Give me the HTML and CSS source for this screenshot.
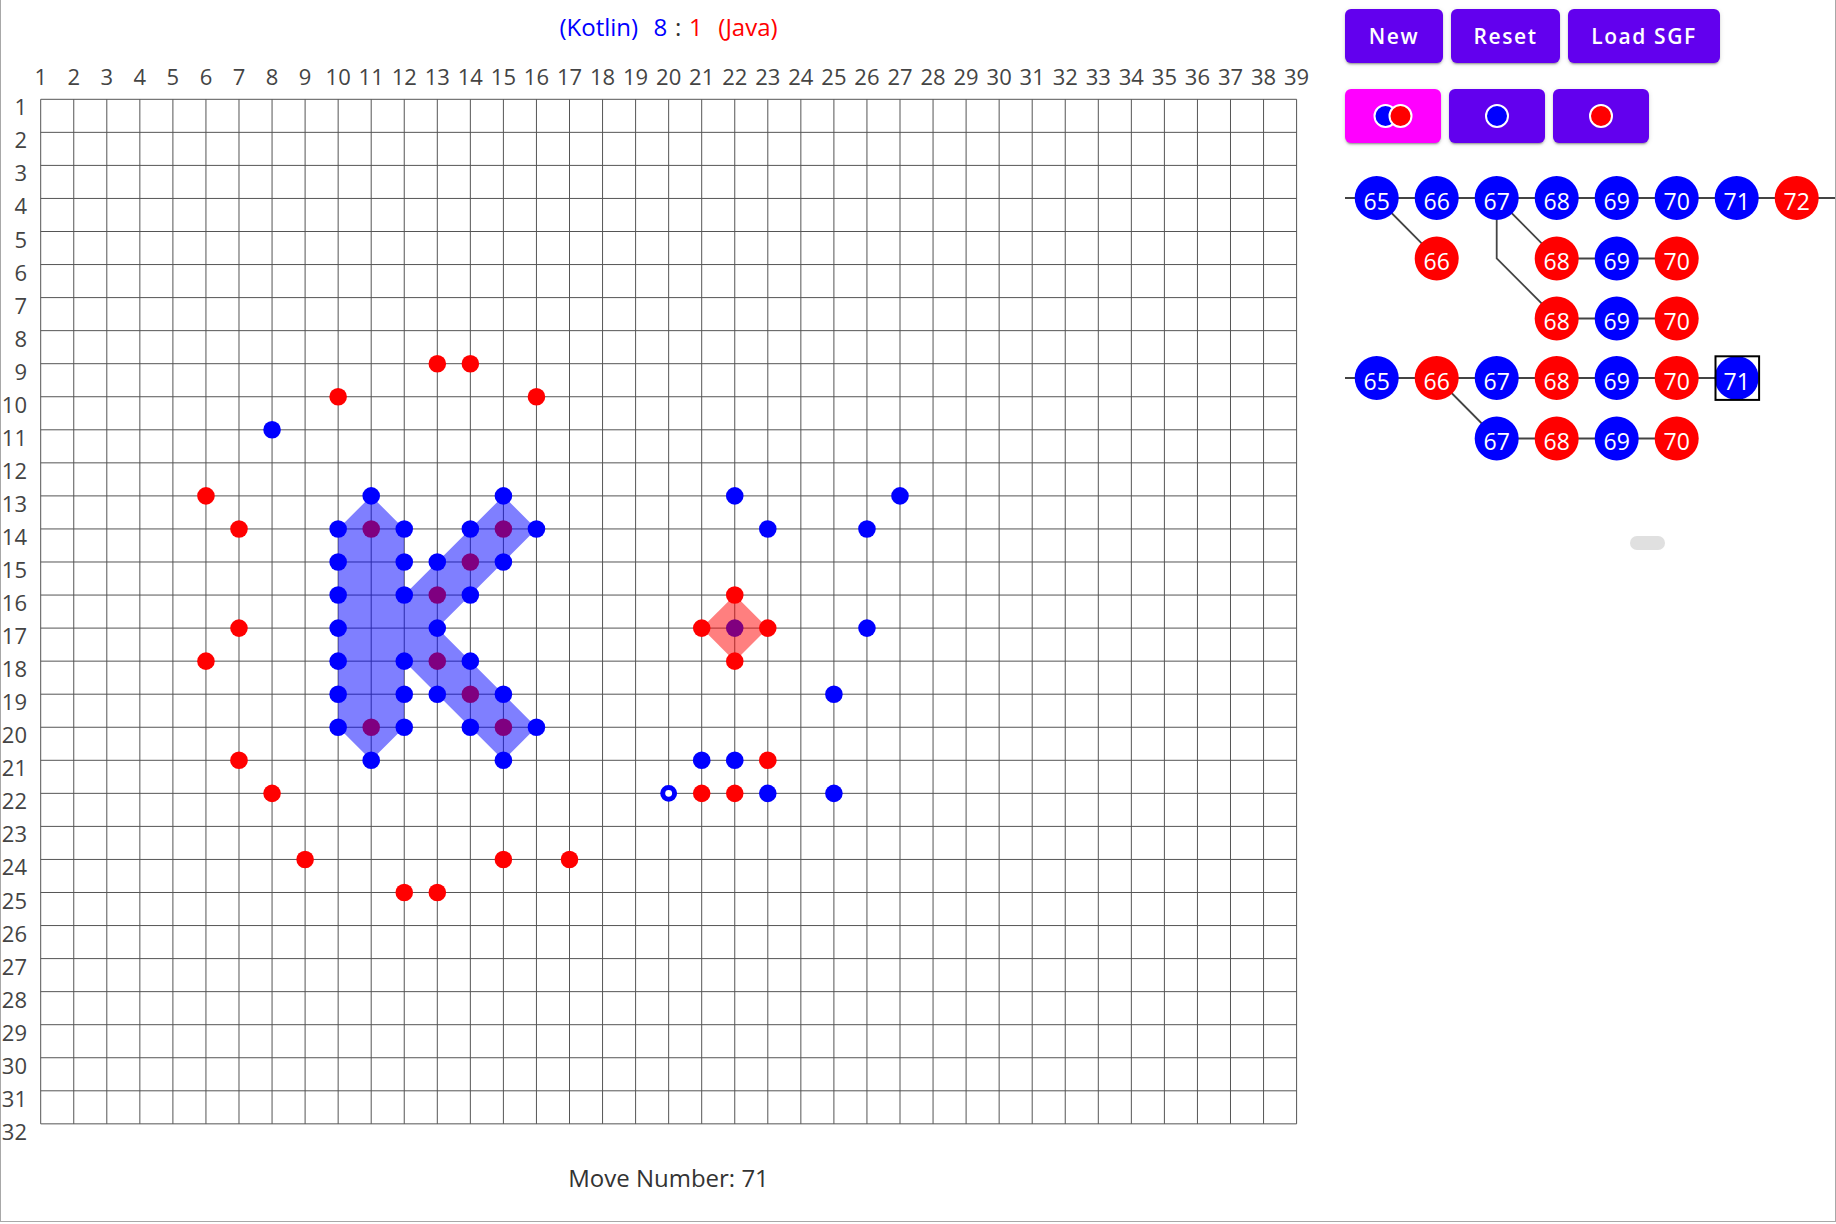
FILE: index.html
```html
<!DOCTYPE html>
<html lang="en">
<head>
<meta charset="utf-8">
<title>Gomoku</title>
<link rel="stylesheet" href="styles.css">
</head>
<body>
<div class="frame">
  <main class="board-col">
    <div class="score"><span class="blue">(Kotlin)</span>  <span class="blue">8</span> <span class="sep">:</span> <span class="red">1</span>  <span class="red">(Java)</span></div>
    <svg class="board" width="1335" height="1118" viewBox="1 43 1335 1118">
      <g class="col-labels">
        <text x="40.7" y="85">1</text><text x="73.75" y="85">2</text><text x="106.8" y="85">3</text><text x="139.85" y="85">4</text><text x="172.9" y="85">5</text><text x="205.95" y="85">6</text><text x="239" y="85">7</text><text x="272.05" y="85">8</text><text x="305.1" y="85">9</text><text x="338.15" y="85">10</text><text x="371.2" y="85">11</text><text x="404.25" y="85">12</text><text x="437.3" y="85">13</text><text x="470.35" y="85">14</text><text x="503.4" y="85">15</text><text x="536.45" y="85">16</text><text x="569.5" y="85">17</text><text x="602.55" y="85">18</text><text x="635.6" y="85">19</text><text x="668.65" y="85">20</text><text x="701.7" y="85">21</text><text x="734.75" y="85">22</text><text x="767.8" y="85">23</text><text x="800.85" y="85">24</text><text x="833.9" y="85">25</text><text x="866.95" y="85">26</text><text x="900" y="85">27</text><text x="933.05" y="85">28</text><text x="966.1" y="85">29</text><text x="999.15" y="85">30</text><text x="1032.2" y="85">31</text><text x="1065.25" y="85">32</text><text x="1098.3" y="85">33</text><text x="1131.35" y="85">34</text><text x="1164.4" y="85">35</text><text x="1197.45" y="85">36</text><text x="1230.5" y="85">37</text><text x="1263.55" y="85">38</text><text x="1296.6" y="85">39</text>
      </g>
      <g class="row-labels" transform="translate(0 -1.5)">
        <text x="27" y="116.8">1</text><text x="27" y="149.85">2</text><text x="27" y="182.9">3</text><text x="27" y="215.95">4</text><text x="27" y="249">5</text><text x="27" y="282.05">6</text><text x="27" y="315.1">7</text><text x="27" y="348.15">8</text><text x="27" y="381.2">9</text><text x="27" y="414.25">10</text><text x="27" y="447.3">11</text><text x="27" y="480.35">12</text><text x="27" y="513.4">13</text><text x="27" y="546.45">14</text><text x="27" y="579.5">15</text><text x="27" y="612.55">16</text><text x="27" y="645.6">17</text><text x="27" y="678.65">18</text><text x="27" y="711.7">19</text><text x="27" y="744.75">20</text><text x="27" y="777.8">21</text><text x="27" y="810.85">22</text><text x="27" y="843.9">23</text><text x="27" y="876.95">24</text><text x="27" y="910">25</text><text x="27" y="943.05">26</text><text x="27" y="976.1">27</text><text x="27" y="1009.15">28</text><text x="27" y="1042.2">29</text><text x="27" y="1075.25">30</text><text x="27" y="1108.3">31</text><text x="27" y="1141.35">32</text>
      </g>
      <g transform="translate(40.7 99.3) scale(33.05)">
        <path class="grid" vector-effect="non-scaling-stroke" d="M0 0V31M1 0V31M2 0V31M3 0V31M4 0V31M5 0V31M6 0V31M7 0V31M8 0V31M9 0V31M10 0V31M11 0V31M12 0V31M13 0V31M14 0V31M15 0V31M16 0V31M17 0V31M18 0V31M19 0V31M20 0V31M21 0V31M22 0V31M23 0V31M24 0V31M25 0V31M26 0V31M27 0V31M28 0V31M29 0V31M30 0V31M31 0V31M32 0V31M33 0V31M34 0V31M35 0V31M36 0V31M37 0V31M38 0V31M0 0H38M0 1H38M0 2H38M0 3H38M0 4H38M0 5H38M0 6H38M0 7H38M0 8H38M0 9H38M0 10H38M0 11H38M0 12H38M0 13H38M0 14H38M0 15H38M0 16H38M0 17H38M0 18H38M0 19H38M0 20H38M0 21H38M0 22H38M0 23H38M0 24H38M0 25H38M0 26H38M0 27H38M0 28H38M0 29H38M0 30H38M0 31H38"/>
        <g class="stone-blue">
          <circle cx="7" cy="10" r=".266"/>
          <circle cx="10" cy="12" r=".266"/><circle cx="14" cy="12" r=".266"/><circle cx="21" cy="12" r=".266"/><circle cx="26" cy="12" r=".266"/>
          <circle cx="9" cy="13" r=".266"/><circle cx="11" cy="13" r=".266"/><circle cx="13" cy="13" r=".266"/><circle cx="15" cy="13" r=".266"/><circle cx="22" cy="13" r=".266"/><circle cx="25" cy="13" r=".266"/>
          <circle cx="9" cy="14" r=".266"/><circle cx="11" cy="14" r=".266"/><circle cx="12" cy="14" r=".266"/><circle cx="14" cy="14" r=".266"/>
          <circle cx="9" cy="15" r=".266"/><circle cx="11" cy="15" r=".266"/><circle cx="13" cy="15" r=".266"/>
          <circle cx="9" cy="16" r=".266"/><circle cx="12" cy="16" r=".266"/><circle cx="25" cy="16" r=".266"/><circle cx="21" cy="16" r=".266"/>
          <circle cx="9" cy="17" r=".266"/><circle cx="11" cy="17" r=".266"/><circle cx="13" cy="17" r=".266"/>
          <circle cx="9" cy="18" r=".266"/><circle cx="11" cy="18" r=".266"/><circle cx="12" cy="18" r=".266"/><circle cx="14" cy="18" r=".266"/><circle cx="24" cy="18" r=".266"/>
          <circle cx="9" cy="19" r=".266"/><circle cx="11" cy="19" r=".266"/><circle cx="13" cy="19" r=".266"/><circle cx="15" cy="19" r=".266"/>
          <circle cx="10" cy="20" r=".266"/><circle cx="14" cy="20" r=".266"/><circle cx="20" cy="20" r=".266"/><circle cx="21" cy="20" r=".266"/>
          <circle cx="22" cy="21" r=".266"/><circle cx="24" cy="21" r=".266"/>
        </g>
        <circle class="stone-last" vector-effect="non-scaling-stroke" cx="19" cy="21" r=".18"/>
        <g class="stone-red">
          <circle cx="12" cy="8" r=".266"/><circle cx="13" cy="8" r=".266"/>
          <circle cx="9" cy="9" r=".266"/><circle cx="15" cy="9" r=".266"/>
          <circle cx="5" cy="12" r=".266"/>
          <circle cx="6" cy="13" r=".266"/><circle cx="10" cy="13" r=".266"/><circle cx="14" cy="13" r=".266"/>
          <circle cx="13" cy="14" r=".266"/>
          <circle cx="12" cy="15" r=".266"/><circle cx="21" cy="15" r=".266"/>
          <circle cx="6" cy="16" r=".266"/><circle cx="20" cy="16" r=".266"/><circle cx="22" cy="16" r=".266"/>
          <circle cx="5" cy="17" r=".266"/><circle cx="12" cy="17" r=".266"/><circle cx="21" cy="17" r=".266"/>
          <circle cx="13" cy="18" r=".266"/>
          <circle cx="10" cy="19" r=".266"/><circle cx="14" cy="19" r=".266"/>
          <circle cx="6" cy="20" r=".266"/><circle cx="22" cy="20" r=".266"/>
          <circle cx="7" cy="21" r=".266"/><circle cx="20" cy="21" r=".266"/><circle cx="21" cy="21" r=".266"/>
          <circle cx="8" cy="23" r=".266"/><circle cx="14" cy="23" r=".266"/><circle cx="16" cy="23" r=".266"/>
          <circle cx="11" cy="24" r=".266"/><circle cx="12" cy="24" r=".266"/>
        </g>
        <path class="zone-blue" d="M9 13L10 12L11 13L11 15L14 12L15 13L12 16L15 19L14 20L11 17L11 19L10 20L9 19Z"/>
        <path class="zone-red" d="M21 15L22 16L21 17L20 16Z"/>
      </g>
    </svg>
    <div class="move-number">Move Number: 71</div>
  </main>

  <aside class="panel">
    <div class="actions">
      <button class="btn btn-new">New</button>
      <button class="btn btn-reset">Reset</button>
      <button class="btn btn-load">Load SGF</button>
    </div>
    <div class="modes">
      <button class="btn mode active" aria-label="Both players">
        <svg width="40" height="28" viewBox="0 0 40 28"><circle class="ic-blue" cx="12.5" cy="14" r="11"/><circle class="ic-red" cx="27.5" cy="14" r="11"/></svg>
      </button>
      <button class="btn mode" aria-label="Blue player">
        <svg width="28" height="28" viewBox="0 0 28 28"><circle class="ic-blue" cx="14" cy="14" r="11"/></svg>
      </button>
      <button class="btn mode" aria-label="Red player">
        <svg width="28" height="28" viewBox="0 0 28 28"><circle class="ic-red" cx="14" cy="14" r="11"/></svg>
      </button>
    </div>

    <svg class="tree" width="490" height="180" viewBox="0 0 490 180">
      <path class="edge" d="M0 30H490M211.7 90.5H331.7M211.7 150.5H331.7M31.7 30L91.7 90.5M151.7 30L211.7 90.5M151.7 30V90.5L211.7 150.5"/>
      <g class="node-blue">
        <circle cx="31.7" cy="30" r="22"/><circle cx="91.7" cy="30" r="22"/><circle cx="151.7" cy="30" r="22"/><circle cx="211.7" cy="30" r="22"/><circle cx="271.7" cy="30" r="22"/><circle cx="331.7" cy="30" r="22"/><circle cx="391.7" cy="30" r="22"/>
        <circle cx="271.7" cy="90.5" r="22"/><circle cx="271.7" cy="150.5" r="22"/>
      </g>
      <g class="node-red">
        <circle cx="451.7" cy="30" r="22"/>
        <circle cx="91.7" cy="90.5" r="22"/><circle cx="211.7" cy="90.5" r="22"/><circle cx="331.7" cy="90.5" r="22"/>
        <circle cx="211.7" cy="150.5" r="22"/><circle cx="331.7" cy="150.5" r="22"/>
      </g>
      <g class="node-text">
        <text x="31.7" y="41.5">65</text><text x="91.7" y="41.5">66</text><text x="151.7" y="41.5">67</text><text x="211.7" y="41.5">68</text><text x="271.7" y="41.5">69</text><text x="331.7" y="41.5">70</text><text x="391.7" y="41.5">71</text><text x="451.7" y="41.5">72</text>
        <text x="91.7" y="102">66</text><text x="211.7" y="102">68</text><text x="271.7" y="102">69</text><text x="331.7" y="102">70</text>
        <text x="211.7" y="162">68</text><text x="271.7" y="162">69</text><text x="331.7" y="162">70</text>
      </g>
    </svg>

    <svg class="tree" width="490" height="120" viewBox="0 0 490 120">
      <path class="edge" d="M0 30H391.7M151.7 90.5H331.7M91.7 30L151.7 90.5"/>
      <g class="node-blue">
        <circle cx="31.7" cy="30" r="22"/><circle cx="151.7" cy="30" r="22"/><circle cx="271.7" cy="30" r="22"/><circle cx="391.7" cy="30" r="22"/>
        <circle cx="151.7" cy="90.5" r="22"/><circle cx="271.7" cy="90.5" r="22"/>
      </g>
      <g class="node-red">
        <circle cx="91.7" cy="30" r="22"/><circle cx="211.7" cy="30" r="22"/><circle cx="331.7" cy="30" r="22"/>
        <circle cx="211.7" cy="90.5" r="22"/><circle cx="331.7" cy="90.5" r="22"/>
      </g>
      <g class="node-text">
        <text x="31.7" y="41.5">65</text><text x="91.7" y="41.5">66</text><text x="151.7" y="41.5">67</text><text x="211.7" y="41.5">68</text><text x="271.7" y="41.5">69</text><text x="331.7" y="41.5">70</text><text x="391.7" y="41.5">71</text>
        <text x="151.7" y="102">67</text><text x="211.7" y="102">68</text><text x="271.7" y="102">69</text><text x="331.7" y="102">70</text>
      </g>
      <rect class="current" x="370.5" y="8.3" width="43.6" height="43.6"/>
    </svg>

    <div class="scroll-thumb"></div>
  </aside>
</div>
</body>
</html>
```

FILE: styles.css
```css
html, body {
  margin: 0;
  padding: 0;
  background: #ffffff;
}

body {
  font-family: "Open Sans", "Noto Sans", sans-serif;
  color: #333333;
}

.frame {
  display: flex;
  width: 1836px;
  height: 1222px;
  box-sizing: border-box;
  border: 1px solid #a8a8a8;
  border-top: none;
  overflow: hidden;
}

/* ---------- board column ---------- */
.board-col {
  flex: none;
  width: 1335px;
  display: flex;
  flex-direction: column;
  align-items: center;
}

.score {
  padding-top: 10px;
  height: 33px;
  line-height: 33px;
  font-size: 24px;
  white-space: pre;
  word-spacing: 1.5px;
  color: #333333;
}

.blue { color: #0000ff; }
.red { color: #ff0000; }
.sep { color: #333333; }

.board {
  display: block;
  flex: none;
}

.col-labels text,
.row-labels text {
  font-family: "Open Sans", "Noto Sans", sans-serif;
  font-size: 22px;
  fill: #444444;
}

.col-labels { text-anchor: middle; }
.row-labels { text-anchor: end; }

.grid {
  fill: none;
  stroke: #555555;
  stroke-width: 1;
}

.stone-blue { fill: #0000ff; }
.stone-red { fill: #ff0000; }

.stone-last {
  fill: #ffffff;
  stroke: #0000ff;
  stroke-width: 5;
}

.zone-blue { fill: #0000ff; fill-opacity: 0.5; }
.zone-red { fill: #ff0000; fill-opacity: 0.5; }

.move-number {
  font-size: 24px;
  line-height: 33px;
  color: #333333;
}

/* ---------- side panel ---------- */
.panel {
  flex: 1;
  min-width: 0;
  padding-left: 9px;
  display: flex;
  flex-direction: column;
  align-items: flex-start;
}

.actions,
.modes {
  display: flex;
  gap: 8px;
}

.actions { margin-top: 9px; }
.modes { margin-top: 26px; }

.btn {
  display: flex;
  align-items: center;
  justify-content: center;
  height: 54px;
  padding: 0;
  border: none;
  border-radius: 6px;
  background: #6200ee;
  color: #ffffff;
  font-family: "Open Sans", "Noto Sans", sans-serif;
  font-weight: 600;
  font-size: 21px;
  letter-spacing: 1.6px;
  box-shadow: 0 3px 1px -2px rgba(0,0,0,.2), 0 2px 2px 0 rgba(0,0,0,.14), 0 1px 5px 0 rgba(0,0,0,.12);
}

.btn-new { width: 98px; }
.btn-reset { width: 109px; }
.btn-load { width: 152px; }

.mode { width: 96px; }
.mode.active { background: #ff00ff; }

.ic-blue { fill: #0000ff; stroke: #ffffff; stroke-width: 2; }
.ic-red { fill: #ff0000; stroke: #ffffff; stroke-width: 2; }

.tree {
  display: block;
  flex: none;
}

.tree:first-of-type { margin-top: 25px; }

.edge {
  fill: none;
  stroke: #444444;
  stroke-width: 1.8;
}

.node-blue { fill: #0000ff; }
.node-red { fill: #ff0000; }

.node-text text {
  fill: #ffffff;
  font-family: "Open Sans", "Noto Sans", sans-serif;
  font-size: 23px;
  text-anchor: middle;
}

.current {
  fill: none;
  stroke: #000000;
  stroke-width: 2;
}

.scroll-thumb {
  margin-top: 68px;
  margin-left: 285px;
  width: 35px;
  height: 14px;
  border-radius: 7px;
  background: #e0e0e0;
}
```
